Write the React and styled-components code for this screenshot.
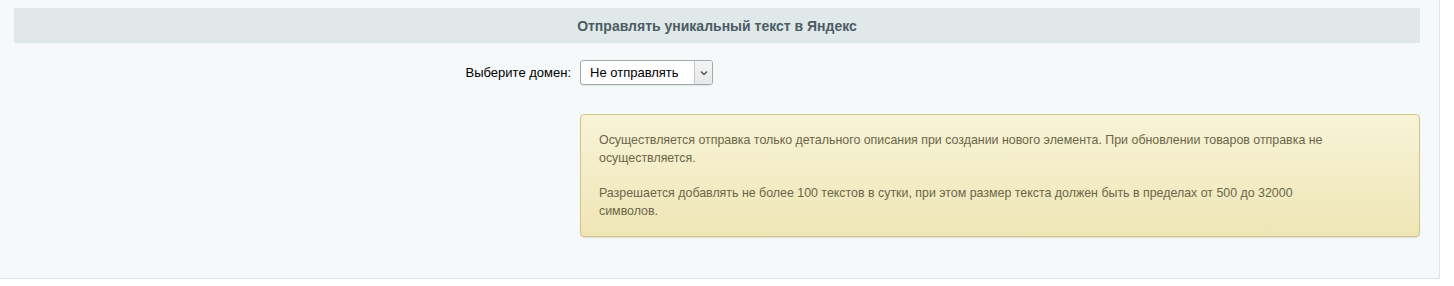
import React from "react";
import styled, { createGlobalStyle } from "styled-components";

const GlobalStyle = createGlobalStyle`
  html, body {
    margin: 0;
    padding: 0;
    background: #ffffff;
    font-family: "Liberation Sans", Arial, sans-serif;
  }
`;

const Panel = styled.div`
  width: 1440px;
  height: 279px;
  box-sizing: border-box;
  background: #f5f9f9;
  border-right: 1px solid #dde5e8;
  border-bottom: 1px solid #dde5e8;
  padding: 8px 19px 0 14px;
`;

const Heading = styled.div`
  height: 35px;
  background: #e0e8ea;
  display: flex;
  align-items: center;
  justify-content: center;
  color: #4b5d63;
  font-size: 14px;
  font-weight: bold;
`;

const Form = styled.div`
  display: grid;
  grid-template-columns: 566px 1fr;
  row-gap: 29px;
  padding-top: 17px;
`;

const Label = styled.label`
  display: flex;
  align-items: center;
  justify-content: flex-end;
  padding-right: 9px;
  font-size: 13px;
  color: #000;
`;

const Select = styled.div`
  width: 133px;
  height: 25px;
  box-sizing: border-box;
  border: 1px solid #a3a8ab;
  border-radius: 3px;
  background: #fff;
  display: flex;
  align-items: stretch;
  font-size: 13px;
  color: #000;
  box-shadow: 0 1px 1px rgba(0, 0, 0, 0.08);
`;

const SelectValue = styled.span`
  flex: 1;
  display: flex;
  align-items: center;
  padding-left: 9px;
`;

const SelectArrow = styled.span`
  width: 17px;
  border-left: 1px solid #c2c6c8;
  background: linear-gradient(#f4f5f5, #e6e8e9);
  border-radius: 0 2px 2px 0;
  display: flex;
  align-items: center;
  justify-content: center;
`;

const Note = styled.div`
  box-sizing: border-box;
  height: 123px;
  border: 1px solid #d2c58f;
  border-radius: 4px;
  background: linear-gradient(#f7f3d7, #efe6b6);
  padding: 16px 18px 0 18px;
  color: #6b6648;
  font-size: 12.4px;
  line-height: 18px;
  box-shadow: 0 1px 1px rgba(160, 150, 100, 0.25);
`;

const Paragraph = styled.p`
  margin: 0 0 17px 0;
`;

export default function App() {
  return (
    <>
      <GlobalStyle />
      <Panel>
        <Heading>Отправлять уникальный текст в Яндекс</Heading>
        <Form>
          <Label>Выберите домен:</Label>
          <Select>
            <SelectValue>Не отправлять</SelectValue>
            <SelectArrow>
              <svg width="8" height="6" viewBox="0 0 8 6">
                <path d="M1 1.5 L4 4.5 L7 1.5" fill="none" stroke="#555" strokeWidth="1.5" />
              </svg>
            </SelectArrow>
          </Select>
          <div />
          <Note>
            <Paragraph>
              Осуществляется отправка только детального описания при создании нового элемента. При обновлении товаров отправка не
              <br />
              осуществляется.
            </Paragraph>
            <Paragraph>
              Разрешается добавлять не более 100 текстов в сутки, при этом размер текста должен быть в пределах от 500 до 32000
              <br />
              символов.
            </Paragraph>
          </Note>
        </Form>
      </Panel>
    </>
  );
}
